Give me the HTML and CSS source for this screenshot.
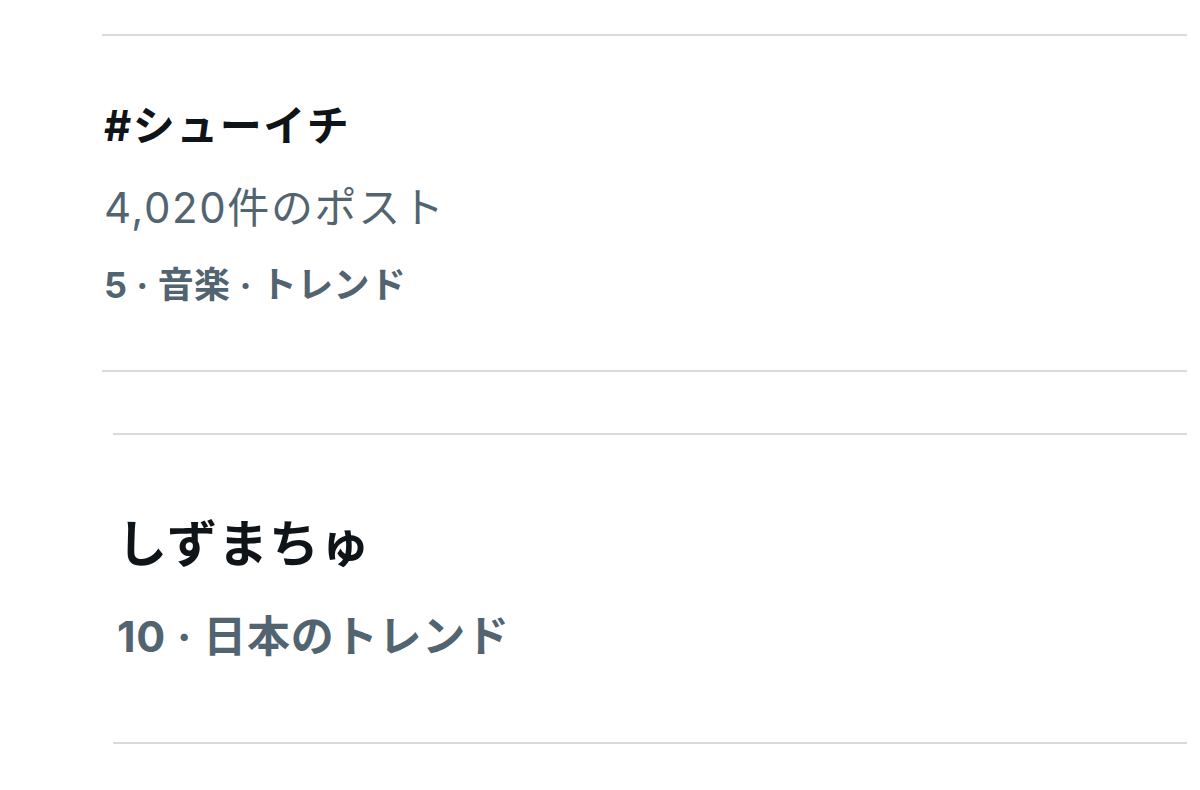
FILE: index.html
```html
<!DOCTYPE html>
<html lang="ja">
<head>
    <meta charset="UTF-8">
    <meta name="viewport" content="width=device-width, initial-scale=1.0">
    <title>トレンド</title>
    <link rel="stylesheet" href="styles.css">
</head>
<body>
    <div class="trends">
        <div class="trend trend-small">
            <div class="trend-title">#シューイチ</div>
            <div class="trend-count">4,020件のポスト</div>
            <div class="trend-meta">5 · 音楽 · トレンド</div>
        </div>

        <div class="trend trend-large">
            <div class="trend-title">しずまちゅ</div>
            <div class="trend-meta">10 · 日本のトレンド</div>
        </div>
    </div>
</body>
</html>
```

FILE: styles.css
```css
body {
    background-color: #ffffff;
    color: #0f1419;
    font-family: Inter, "Noto Sans CJK JP", sans-serif;
    margin: 0;
    padding: 0;
}
.trends {
    padding-top: 34px;
    padding-right: 13px;
}
.trend {
    border-top: 2px solid #dadada;
    border-bottom: 2px solid #dadada;
}
.trend-title {
    font-weight: 700;
}
.trend-count,
.trend-meta {
    color: #536471;
}
.trend-meta {
    font-weight: 700;
}

/* primo blocco */
.trend-small {
    margin-left: 102px;
    padding: 62px 0 61px 2px;
}
.trend-small .trend-title {
    font-size: 42px;
    line-height: 56px;
    letter-spacing: 1.5px;
}
.trend-small .trend-count {
    font-size: 42px;
    line-height: 56px;
    letter-spacing: 1.6px;
    margin-top: 26px;
}
.trend-small .trend-meta {
    font-size: 36px;
    line-height: 48px;
    letter-spacing: 0.4px;
    margin-top: 25px;
}

/* secondo blocco, un po' piu' grande */
.trend-large {
    margin-left: 113px;
    margin-top: 61px;
    padding: 77px 0 78px 4px;
}
.trend-large .trend-title {
    font-size: 50px;
    line-height: 64px;
    letter-spacing: 1px;
}
.trend-large .trend-meta {
    font-size: 43px;
    line-height: 56px;
    letter-spacing: 0.8px;
    margin-top: 32px;
}
```
